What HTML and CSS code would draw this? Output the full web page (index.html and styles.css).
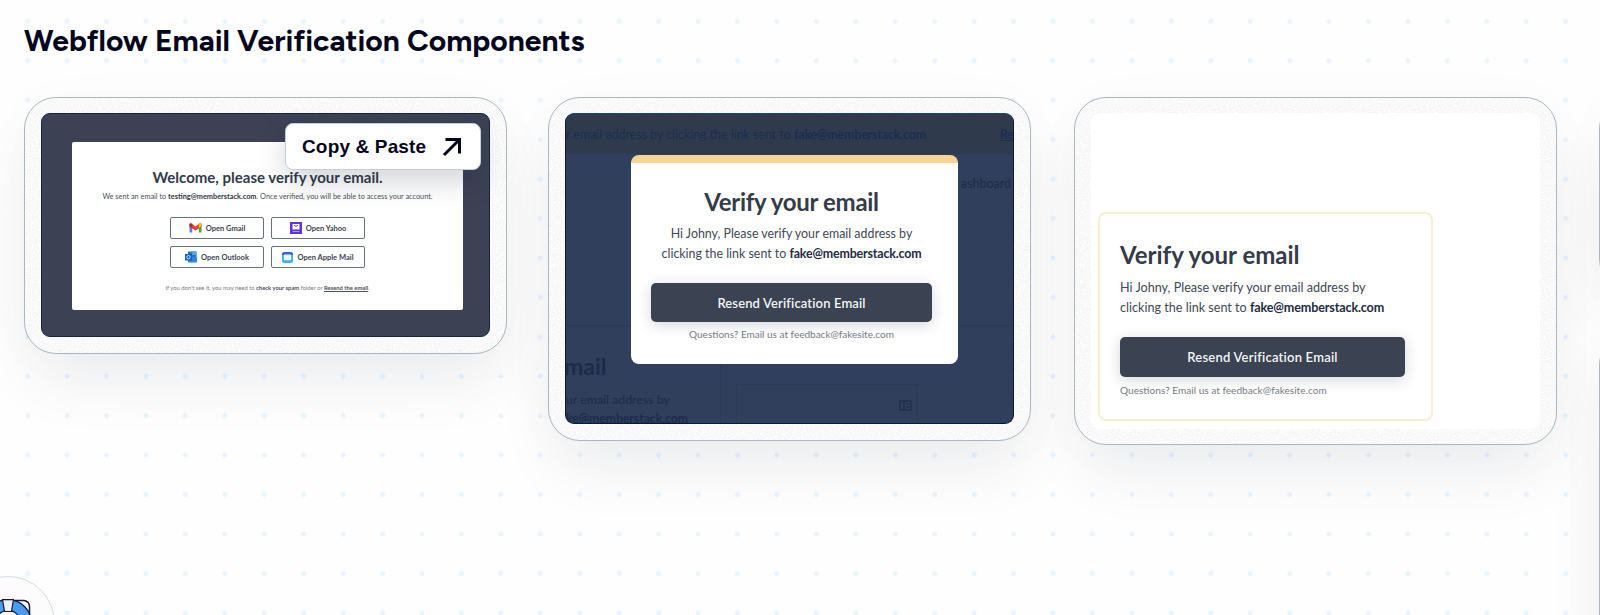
FILE: index.html
```html
<!DOCTYPE html>
<html lang="en">
<head>
<meta charset="utf-8">
<title>Webflow Email Verification Components</title>
<link rel="stylesheet" href="styles.css">
</head>
<body>
<main class="page">
  <h1 class="title"><span>Webflow Email Verification Components</span></h1>
  <section class="cards">
    <article class="card">
      <div class="shot shot-welcome">
        <div class="welcome">
          <h2 class="welcome-title">Welcome, please verify your email.</h2>
          <p class="welcome-text">We sent an email to <b>testing@memberstack.com</b>. Once verified, you will be able to access your account.</p>
          <div class="providers">
            <div class="provider"><svg width="13" height="10" viewBox="0 0 13 10"><path d="M.5 1.500V9.500H3.200V4" fill="#4285f4"/><path d="M9.800 4V9.500H12.500V1.500" fill="#34a853"/><path d="M.5 4V1.600C.5.300 1.900-.200 3 .700L6.500 3.500 10 .700C11.100-.200 12.500.300 12.500 1.600V4L6.500 7.500Z" fill="#ea4335"/><path d="M9.800 1V5L12.500 3.500V1.600C12.500.300 11 0 9.800 1Z" fill="#fbbc04"/><path d="M.5 1.600V3.500L3.200 5.200V1C2 0 .5.300.5 1.600Z" fill="#c5221f"/></svg>Open Gmail</div>
            <div class="provider"><svg width="12" height="12" viewBox="0 0 12 12"><path fill="#6331d8" d="M0 0H12V12H0Z"/><path fill="#fff" d="M2.500 2H9.500V7.500H2.500Z"/><path d="M4 3 6 4.500 8 3" fill="none" stroke="#6331d8"/><path d="M2.500 9.500H9.500" stroke="#b9a0f4"/></svg>Open Yahoo</div>
            <div class="provider"><svg width="12" height="12" viewBox="0 0 12 12"><path fill="#1d74c9" d="M3 .5H11.500V7H3Z"/><path fill="#50a7ea" d="M7 .5H11.500V4H7Z"/><path fill="#2f86dc" d="M3 6H12V11.500H3Z"/><path fill="#1762b5" d="M0 3H7V9.500H0Z"/><circle cx="3.500" cy="6.200" r="1.700" fill="none" stroke="#cfe4fa"/></svg>Open Outlook</div>
            <div class="provider"><svg width="11" height="11" viewBox="0 0 11 11"><rect width="11" height="11" rx="2.500" fill="#38b2f5"/><path d="M0 3V2.500Q0 0 2.500 0H8.500Q11 0 11 2.500V3Z" fill="#2867e5"/><rect x="1.800" y="2.600" width="7.400" height="5.600" rx="1" fill="#f2faff"/></svg>Open Apple Mail</div>
          </div>
          <p class="welcome-foot">If you don't see it, you may need to <b>check your spam</b> folder or <b class="link">Resend the email</b>.</p>
        </div>
      </div>
      <a class="copy"><span>Copy &amp; Paste</span><svg width="20" height="20" viewBox="0 0 20 20"><path d="M3.500 2.500H17.500V16.500M17.500 2.500 2 18" fill="none" stroke="#05061c" stroke-width="3"/></svg></a>
    </article>

    <article class="card card-modal">
      <div class="shot shot-modal">
        <div class="backdrop">
          <div class="bar"><span class="bar-text">r email address by clicking the link sent to <b>fake@memberstack.com</b></span><b class="link">Re</b></div>
          <div class="menu">ashboard</div>
          <div class="under">
            <div class="under-copy"><strong>mail</strong><span class="under-a">ur email address by</span><span class="under-b">ke@memberstack.com</span></div>
            <div class="under-field"><svg width="13" height="11" viewBox="0 0 13 11"><path d="M1 1H12V10H1ZM5 1V10M7.500 4H10M7.500 7H10" fill="none" stroke="#222e4b" stroke-width="1.400"/></svg></div>
          </div>
        </div>
        <div class="verify modal">
          <h2>Verify your email</h2>
          <p class="line a">Hi Johny, Please verify your email address by</p>
          <p class="line b">clicking the link sent to <b>fake@memberstack.com</b></p>
          <div class="button"><span>Resend Verification Email</span></div>
          <p class="ask">Questions? Email us at feedback@fakesite.com</p>
        </div>
      </div>
    </article>

    <article class="card card-inline">
      <div class="shot shot-inline">
        <div class="verify boxed">
          <h2>Verify your email</h2>
          <p class="line a">Hi Johny, Please verify your email address by</p>
          <p class="line b">clicking the link sent to <b>fake@memberstack.com</b></p>
          <div class="button"><span>Resend Verification Email</span></div>
          <p class="ask">Questions? Email us at feedback@fakesite.com</p>
        </div>
      </div>
    </article>

    <div class="next">
      <div class="card peek-short"></div>
      <div class="card peek-tall"></div>
    </div>
  </section>
</main>
<div class="help-clip">
  <div class="help">
    <svg width="48" height="48" viewBox="0 0 48 48"><path d="M31 1.500H40Q46 2.500 45.500 9V17" fill="none" stroke="#14163f" stroke-width="1.500"/><circle cx="24" cy="24" r="18" fill="none" stroke="#14163f" stroke-width="12"/><circle cx="24" cy="24" r="18" fill="none" stroke="#4a9cf0" stroke-width="9.500"/><path d="M18.500 .7H29.500L27.500 12.500H20.500Z" fill="#eef2fb" stroke="#14163f" stroke-width="1.200"/></svg>
  </div>
</div>
</body>
</html>
```

FILE: styles.css
```css
* { box-sizing: border-box; }
body {
  margin: 0;
  overflow: hidden;
  background: #fefefe radial-gradient(circle at 50% 50%, #e9f4ff 2.200px, rgba(233,244,255,0) 2.900px) 7.900px 1.600px / 39.450px 39.450px;
  color: #04061e;
  font-family: Lato, "Liberation Sans", sans-serif;
}
h1, h2, p { margin: 0; }
.page { width: 100%; height: 615px; overflow: hidden; padding: 22px 0 0 24px; }
.title { height: 75px; font: 700 30px/38px Figtree, Lato, sans-serif; white-space: nowrap; }
.cards { display: flex; align-items: flex-start; gap: 42px; }
.card {
  position: relative;
  width: 483px;
  flex: none;
  padding: 15px 16px 16px;
  border: 1px solid #a9b6c7;
  border-radius: 32px;
  background: #f5f5f5 url("data:image/svg+xml,%3Csvg xmlns='http://www.w3.org/2000/svg' width='200' height='200'%3E%3Cfilter id='n'%3E%3CfeTurbulence type='fractalNoise' baseFrequency='.7' numOctaves='2' stitchTiles='stitch'/%3E%3CfeColorMatrix values='0 0 0 0 1 0 0 0 0 1 0 0 0 0 1 3 0 0 0 -1.1'/%3E%3C/filter%3E%3Crect width='200' height='200' filter='url(%23n)'/%3E%3C/svg%3E");
  box-shadow: 0 34px 64px -8px rgba(20, 30, 55, .07), 0 6px 60px rgba(20, 30, 55, .025);
}
.card-modal { margin: 0 1px 0 -1px; }
.card-inline { padding-bottom: 15px; }
.shot { overflow: hidden; border-radius: 9px; white-space: nowrap; }

.shot-welcome { height: 224px; padding: 28px 26px 27px 30px; background: #3c4254; border: 1px solid #142647; }
.welcome { height: 168px; background: #fff; border-radius: 2px; padding-top: 25px; display: flex; flex-direction: column; align-items: center; color: #4a4f5c; }
.welcome-title { font-size: 15px; line-height: 20px; color: #333b4b; }
.welcome-text { margin-top: 5px; font-size: 7.340px; line-height: 10px; }
.welcome-text b { color: #2f3747; }
.providers { margin-top: 15px; display: grid; grid-template-columns: 94px 94px; grid-auto-rows: 22px; gap: 7px; }
.provider { display: flex; align-items: center; justify-content: center; gap: 4px; border: 1px solid #6a707d; border-radius: 2px; font-size: 7.500px; font-weight: 700; color: #3c4352; }
.welcome-foot { margin-top: 15px; font-size: 5.830px; line-height: 10px; color: #777c87; }
.welcome-foot b { color: #4c525f; }
.link { text-decoration: underline; }
.copy {
  position: absolute; top: 25px; right: 25px; width: 196px; height: 47px;
  display: flex; align-items: center; gap: 16px; padding-left: 16px;
  border: 1px solid #c4cfdd; border-radius: 8px; background: #fff;
  box-shadow: 0 12px 28px rgba(20, 30, 55, .18);
  font: 700 19px/24px "Liberation Sans", sans-serif; letter-spacing: .15px;
}

.shot-modal { position: relative; height: 311px; background: #303f5b; border: 1px solid #0b1740; border-top-color: #17486f; }
.backdrop { height: 100%; color: #1d2b4b; }
.bar { height: 40px; display: flex; align-items: center; justify-content: space-between; background: #2f3b4c; font-size: 12.400px; color: #1c2d52; }
.bar .link { letter-spacing: -.5px; }
.menu { height: 172px; padding: 22px 2px 0 0; text-align: right; font-size: 12.500px; border-bottom: 1px solid #2a3955; }
.under { display: flex; height: 97px; }
.under-copy { width: 155px; padding-top: 25px; display: flex; flex-direction: column; border-right: 1px solid #2b3a56; }
.under-copy strong { margin-left: -3px; font-size: 23px; line-height: 30px; height: 38px; padding-left: 1px; }
.under-copy span { font-size: 12.350px; line-height: 19px; position: relative; top: 5px; }
.under .under-b { font-weight: 700; letter-spacing: -.1px; }
.under-field { margin: 58px 0 0 15px; width: 182px; height: 50px; padding: 10px 5px; text-align: right; border: 1px solid #2b3a56; }

.verify { color: #343b4b; }
.verify h2 { font-size: 24px; line-height: 30px; }
.line { font-size: 12.400px; line-height: 19.500px; color: #424857; }
.line b, .bar-text b { letter-spacing: -.15px; }
.line b { color: #232b42; }
.button { height: 39px; display: flex; align-items: center; justify-content: center; border-radius: 5px; background: #3b4251; color: #f4f5f7; font-size: 13px; font-weight: 600; letter-spacing: .13px; box-shadow: 0 3px 14px rgba(30, 36, 50, .18); }
.ask { font-size: 10px; line-height: 14px; color: #777b84; }
.modal { position: absolute; left: 65px; top: 41px; width: 327px; height: 209px; border-top: 8px solid #f8d494; border-radius: 8px; background: #fff; padding: 24px 26px 0 20px; text-align: center; }
.modal h2 { letter-spacing: -.3px; }
.modal .line.a { margin-top: 7px; }
.modal .button { margin-top: 20px; }
.modal .ask { margin-top: 5px; }

.shot-inline { height: 316px; padding: 99px 0 0 7px; background: #fff; }
.boxed { width: 335px; height: 209px; border: 2px solid #f6efd2; border-radius: 8px; padding: 26px 26px 0 20px; }
.boxed .line { font-size: 12.600px; }
.boxed .line.a { margin-top: 8px; }
.boxed .button { height: 40px; margin-top: 20px; letter-spacing: .22px; }
.boxed .ask { margin-top: 6px; font-size: 10.100px; }

.next { display: flex; flex-direction: column; gap: 42px; }
.peek-short { height: 194px; }
.peek-tall { height: 420px; }

/* Support badge, partly outside the lower left corner */
.help-clip { position: absolute; left: 0; top: 576px; width: 56px; height: 39px; overflow: hidden; }
.help { margin-left: -39px; width: 94px; height: 94px; display: flex; align-items: center; justify-content: center; border: 1px solid #cfdcea; border-radius: 50%; background: #fcfcfd; }
.help svg { flex: none; }
```
